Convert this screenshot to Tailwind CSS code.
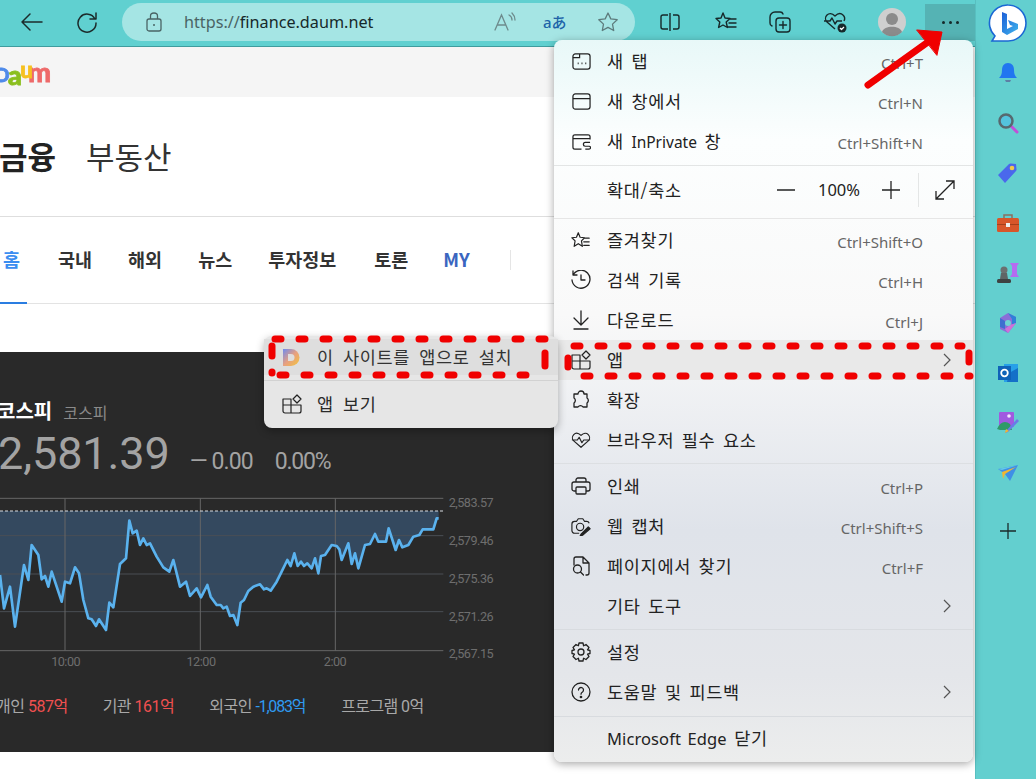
<!DOCTYPE html>
<html lang="ko">
<head>
  <meta charset="UTF-8" />
  <title>Daum 금융</title>
  <script src="https://cdn.jsdelivr.net/npm/@tailwindcss/browser@4"></script>
</head>
<body class="w-[1036px] h-[779px] overflow-hidden bg-white font-['Noto_Sans','Noto_Sans_CJK_KR',sans-serif] text-[#1b1b1b]">
<div class="relative flex w-[1036px] h-[779px] overflow-hidden">

  <!-- left column: toolbar + page -->
  <div class="w-[975px] h-full flex flex-col">
    <!-- toolbar -->
    <div class="h-[47px] shrink-0 bg-[#60d0d0] border-b border-[#3f9c9e] flex items-start pt-[3px]">
      <div class="w-[122px] h-[38px] flex items-center">
        <svg class="ml-[20px]" width="24" height="24" viewBox="0 0 24 24" fill="none" stroke="#1c2b2b" stroke-width="1.5" stroke-linecap="round" stroke-linejoin="round"><path d="M2 12h20M10 4l-8 8 8 8"/></svg>
        <svg class="ml-[31px]" width="24" height="24" viewBox="0 0 24 24" fill="none" stroke="#1c2b2b" stroke-width="1.5" stroke-linecap="round" stroke-linejoin="round"><path d="M20 9a9 9 0 1 0 1 4M21 3v6h-6"/></svg>
      </div>
      <div class="w-[513px] h-[38px] rounded-[19px] bg-[#a5e5e4] flex items-center">
        <svg class="ml-[24px]" width="16" height="20" viewBox="0 0 16 20" fill="none" stroke="#4a6465" stroke-width="1.3"><rect x="1" y="7" width="14" height="12" rx="2"/><path d="M4.5 7V4a3.5 3 0 0 1 7 0v3"/><circle cx="8" cy="13" r="1" fill="#4a6465" stroke="none"/></svg>
        <span class="ml-[22px] text-[16.2px] leading-none text-[#16292a]"><span class="text-[#4a6465]">https://</span>finance.daum.net</span>
        <span class="ml-auto mr-[16px] flex items-center gap-[28px]">
          <svg class="mr-[3px]" width="22" height="20" viewBox="0 0 22 20" fill="none" stroke="#6d8b8c" stroke-width="1.3" stroke-linecap="round"><path d="M1 18L7.5 3 14 18M3.5 13h8M15 3c2 1 3 3 3 5M18 1c2 2 3 4 3 7"/></svg>
          <span class="w-[22px] mr-[4px] ml-[-4px] whitespace-nowrap text-center text-[15px] leading-none font-medium text-[#2063a8] font-['Noto_Sans','Noto_Sans_CJK_JP',sans-serif]">aあ</span>
          <svg width="22" height="22" viewBox="0 0 22 22" fill="none" stroke="#5d7b7c" stroke-width="1.3" stroke-linejoin="round"><path d="M11 2l2.8 5.9 6.4.8-4.7 4.4 1.2 6.4L11 16.4l-5.7 3.1 1.2-6.4L1.800 8.700l6.400-.8z"/></svg>
        </span>
      </div>
      <div class="flex-1 h-[38px] flex items-center">
        <svg class="ml-[24px]" width="22" height="20" viewBox="0 0 22 20" fill="none" stroke="#16292a" stroke-width="1.4"><path d="M9 3H4a2 2 0 0 0-2 2v10a2 2 0 0 0 2 2h5M14 3h4a2 2 0 0 1 2 2v10a2 2 0 0 1-2 2h-4M11 1v18"/></svg>
        <svg class="ml-[33px]" width="24" height="22" viewBox="0 0 24 22" fill="none" stroke="#16292a" stroke-width="1.4" stroke-linejoin="round" stroke-linecap="round"><path d="M9 2l2 5 5 .5-3.800 3.500 1.200 5.500L9 14l-4.400 2.500 1.200-5.500L2 7.500 7 7zM16 8h6M15 12h7M14 16h8"/></svg>
        <svg class="ml-[30px]" width="24" height="24" viewBox="0 0 24 24" fill="none" stroke="#16292a" stroke-width="1.4" stroke-linecap="round"><rect x="8" y="8" width="14" height="14" rx="3"/><path d="M15 11.500v7M11.500 15h7M4 16a3 3 0 0 1-2-3V7a5 5 0 0 1 5-5h5a3 3 0 0 1 3 2"/></svg>
        <svg class="ml-[31px]" width="24" height="24" viewBox="0 0 24 24" fill="none" stroke="#16292a" stroke-width="1.4" stroke-linejoin="round"><path d="M12 19L4 12a5 5 0 0 1 0-7c2-2 5-2 8 1 3-3 6-3 8-1a5 5 0 0 1 1 6M1 11h6l2-3 3 6 2-3h5"/><circle cx="19" cy="18" r="4.500" fill="#16292a" stroke="none"/><path d="M17 18l1.500 1.500L21 17" stroke="#fff" stroke-width="1.200"/></svg>
        <svg class="ml-[30px]" width="30" height="30" viewBox="0 0 30 30"><circle cx="15" cy="15" r="14" fill="#cfcfcf"/><circle cx="15" cy="12" r="6" fill="#8b8b8b"/><path d="M5 25c2-7 18-7 20 0a14 14 0 0 1-20 0z" fill="#8b8b8b"/></svg>
        <div class="ml-[18px] w-[50px] h-[37px] bg-[#55b3b4] flex items-center justify-center gap-[4px]">
          <span class="w-[3px] h-[3px] rounded-full bg-[#15292a]"></span><span class="w-[3px] h-[3px] rounded-full bg-[#15292a]"></span><span class="w-[3px] h-[3px] rounded-full bg-[#15292a]"></span>
        </div>
      </div>
    </div>

    <!-- page -->
    <div class="h-[50px] shrink-0 bg-[#f5f5f5] flex items-center overflow-hidden">
      <span class="ml-[-5px] mt-[-2px] text-[27px] font-black leading-none tracking-[-1.5px] font-['Lato',sans-serif] [-webkit-text-stroke:0.8px] blur-[0.4px] whitespace-nowrap"><span class="text-[#4f8bea] text-[19px]">D</span><span class="inline-block translate-y-[3px] text-[#8bbf1f]">a</span><span class="inline-block -translate-y-[4px] text-[#f6c120] text-[22px] w-[8px]">u</span><span class="text-[#ee6a6a]">m</span></span>
    </div>
    <div class="h-[120px] shrink-0 border-b border-[#dedede] flex items-center font-['Noto_Sans_CJK_KR',sans-serif] text-[31px] leading-none pb-[3px]">
      <span class="ml-[-1px] font-bold text-[#222]">금융</span>
      <span class="ml-[30px] text-[#333]">부동산</span>
    </div>
    <div class="h-[87px] shrink-0 border-b border-[#e3e3e3] relative flex items-center font-['Noto_Sans_CJK_KR',sans-serif] text-[18.5px] font-bold leading-none text-[#333] pb-[1px]">
      <span class="ml-[3px] text-[#3b8ef0]">홈</span>
      <span class="ml-[38px]">국내</span>
      <span class="ml-[36px]">해외</span>
      <span class="ml-[36px]">뉴스</span>
      <span class="ml-[36px]">투자정보</span>
      <span class="ml-[38px]">토론</span>
      <span class="ml-[35px] text-[#3a66c0]">MY</span>
      <span class="ml-[40px] w-px h-[20px] bg-[#e5e5e5]"></span>
      <span class="absolute left-0 bottom-[-1px] w-[27px] h-[2px] bg-[#2a7de1]"></span>
    </div>

    <div class="h-[48px] shrink-0"></div>

    <!-- index card -->
    <div class="w-[570px] h-[400px] shrink-0 bg-[#292929] font-['Roboto','Noto_Sans_CJK_KR',sans-serif] overflow-hidden">
      <div class="flex items-baseline mt-[50px] ml-[-3px] leading-none">
        <span class="text-[20px] font-bold text-white">코스피</span>
        <span class="ml-[11px] text-[16px] text-[#8a8a8a]">코스피</span>
      </div>
      <div class="flex items-baseline mt-[9px] ml-[-2px] leading-none text-[#a3a3a3] h-[50px]">
        <span class="text-[45px] tracking-[-0.1px]">2,581.39</span>
        <span class="ml-[20px] text-[23px] tracking-[-0.9px]">— 0.00</span>
        <span class="ml-[22px] text-[23px] tracking-[-1.2px]">0.00%</span>
      </div>
      <svg class="mt-[9px]" width="520" height="190" viewBox="0 0 1560 570" font-family="Roboto" font-size="38" letter-spacing="-1.5">
        <polygon fill="#34495f" points="0,63 0,255 12,355 30,290 45,410 72,225 85,270 95,165 115,195 125,268 135,258 145,290 155,245 185,335 195,275 210,280 225,232 237,250 250,330 265,385 275,388 288,408 297,388 318,420 328,338 340,352 360,222 378,205 388,92 398,130 410,122 420,165 430,145 440,165 450,160 470,200 490,232 508,245 520,210 540,290 558,275 570,318 590,295 603,322 622,285 632,320 650,345 662,345 670,355 680,350 690,378 700,375 712,405 722,338 732,330 745,303 760,290 780,283 792,298 800,295 812,302 830,275 845,245 862,210 872,228 883,190 893,228 903,215 912,228 922,220 935,235 945,205 955,250 963,198 975,195 995,165 1010,168 1018,178 1025,210 1045,160 1055,222 1065,190 1075,235 1095,165 1110,162 1125,132 1135,155 1158,155 1166,115 1187,180 1197,150 1207,172 1225,165 1240,140 1258,135 1268,118 1300,118 1310,85 1316,85 1316,63"/>
        <g stroke="#4a4f55" stroke-width="3">
          <path d="M0 137H1330M0 252H1330M0 365H1330"/>
        </g>
        <g stroke="#666" stroke-width="3">
          <path d="M0 25H1330M0 482H1330M195 25V482M601 25V482M1006 25V482"/>
        </g>
        <path d="M0 63H1330" stroke="#d8dde2" stroke-width="3" stroke-dasharray="9 6"/>
        <polyline fill="none" stroke="#5ab2ee" stroke-width="8" stroke-linejoin="round" points="0,255 12,355 30,290 45,410 72,225 85,270 95,165 115,195 125,268 135,258 145,290 155,245 185,335 195,275 210,280 225,232 237,250 250,330 265,385 275,388 288,408 297,388 318,420 328,338 340,352 360,222 378,205 388,92 398,130 410,122 420,165 430,145 440,165 450,160 470,200 490,232 508,245 520,210 540,290 558,275 570,318 590,295 603,322 622,285 632,320 650,345 662,345 670,355 680,350 690,378 700,375 712,405 722,338 732,330 745,303 760,290 780,283 792,298 800,295 812,302 830,275 845,245 862,210 872,228 883,190 893,228 903,215 912,228 922,220 935,235 945,205 955,250 963,198 975,195 995,165 1010,168 1018,178 1025,210 1045,160 1055,222 1065,190 1075,235 1095,165 1110,162 1125,132 1135,155 1158,155 1166,115 1187,180 1197,150 1207,172 1225,165 1240,140 1258,135 1268,118 1300,118 1310,85 1316,85"/>
        <g fill="#6e6e6e">
          <text x="1346" y="50">2,583.57</text>
          <text x="1346" y="165">2,579.46</text>
          <text x="1346" y="278">2,575.36</text>
          <text x="1346" y="393">2,571.26</text>
          <text x="1346" y="505">2,567.15</text>
          <text x="197" y="528" text-anchor="middle">10:00</text>
          <text x="603" y="528" text-anchor="middle">12:00</text>
          <text x="1005" y="528" text-anchor="middle">2:00</text>
        </g>
      </svg>
      <div class="flex mt-[19px] ml-[-4px] text-[16px] leading-none tracking-[-0.5px] text-[#a8a8a8] whitespace-nowrap">
        <span>개인 <span class="text-[#f05050]">587억</span></span>
        <span class="ml-[35px]">기관 <span class="text-[#f05050]">161억</span></span>
        <span class="ml-[35px]">외국인 <span class="text-[#2f9bf0] tracking-[-1.2px]">-1,083억</span></span>
        <span class="ml-[36px] tracking-[-0.6px]">프로그램 0억</span>
      </div>
    </div>
  </div>

  <!-- sidebar -->
  <div class="w-[61px] h-full bg-[#63cfcf] border-l border-[#58bfc0] pl-[3px] flex flex-col items-center">
    <div class="h-[48px] flex items-center">
      <svg width="40" height="42" viewBox="0 0 40 42">
        <defs><linearGradient id="bingB" x1="0" y1="0" x2="1" y2="1"><stop offset="0" stop-color="#1d5fd8"/><stop offset="1" stop-color="#3fb4ec"/></linearGradient></defs>
        <path d="M20 2a18 18 0 0 1 0 36H4l3-5A18 18 0 0 1 20 2z" fill="#fff" stroke="#1a68d4" stroke-width="1.600"/>
        <path d="M14 9l5 2v15l6-3-3-1-2-5 10 4v5l-11 6-5-3z" fill="url(#bingB)"/>
      </svg>
    </div>
    <div class="h-[50px] flex items-center">
      <svg width="20" height="22" viewBox="0 0 20 22"><path d="M10 1c4 0 6 3 6 7 0 4 1 6 3 8H1c2-2 3-4 3-8 0-4 2-7 6-7z" fill="#2176f0"/><path d="M7 18h6l-1 2H8z" fill="#5d7fa5"/></svg>
    </div>
    <div class="h-[50px] flex items-center">
      <svg width="22" height="22" viewBox="0 0 22 22"><path d="M13 13l7 7" stroke="#c14fd8" stroke-width="3" stroke-linecap="round"/><circle cx="9" cy="9" r="6.500" fill="#54c3de" stroke="#57686f" stroke-width="2.500"/></svg>
    </div>
    <div class="h-[50px] flex items-center">
      <svg width="22" height="22" viewBox="0 0 22 22"><path d="M1 13L12 2a2 2 0 0 1 2-.5l5 .5.500 5a2 2 0 0 1-.5 2L8 21z" fill="#4a68ec"/><circle cx="15" cy="6" r="2.300" fill="#f2c94c"/></svg>
    </div>
    <div class="h-[50px] flex items-center">
      <svg width="24" height="20" viewBox="0 0 24 20"><path d="M8 6V2h8v4" fill="none" stroke="#8a7060" stroke-width="1.500"/><rect x="1" y="5" width="22" height="14" rx="1.500" fill="#d8562a"/><rect x="1" y="11" width="22" height="1" fill="#a5401c"/><rect x="10" y="10" width="4" height="4" fill="#eee"/></svg>
    </div>
    <div class="h-[50px] flex items-center">
      <svg width="24" height="22" viewBox="0 0 24 22"><path d="M14 1h9l-2 3v8l2 3h-9l2-3V4z" fill="#b56cf0"/><circle cx="8" cy="8" r="3.500" fill="#6b7070"/><path d="M5 11h6l1 6H4z" fill="#5f6464"/><rect x="1" y="17" width="14" height="4" rx="1.500" fill="#3e4242"/></svg>
    </div>
    <div class="h-[50px] flex items-center">
      <svg width="22" height="22" viewBox="0 0 22 22"><path d="M11 1l8 4v6l-8 10-8-4V6z" fill="#8a6fd8"/><path d="M11 1l8 4v6l-4 2V7z" fill="#2f80d8"/><path d="M3 6l5 3v8l-5-2z" fill="#3e6fd0"/><path d="M8 17l5-4 6-2-8 10z" fill="#d070d8"/><circle cx="11" cy="11" r="3" fill="#6fd3d3"/></svg>
    </div>
    <div class="h-[50px] flex items-center">
      <svg width="22" height="20" viewBox="0 0 22 20"><path d="M7 1h14v18H7z" fill="#27a0e8"/><path d="M12 10l9-5v14H10z" fill="#1470c8"/><rect x="1" y="3" width="13" height="14" fill="#0f62b8"/><circle cx="7.500" cy="10" r="3.300" fill="none" stroke="#fff" stroke-width="1.800"/></svg>
    </div>
    <div class="h-[50px] flex items-center">
      <svg width="24" height="24" viewBox="0 0 24 24"><rect x="3" y="1" width="15" height="15" rx="1" fill="#a05ae0"/><circle cx="13" cy="5" r="1.800" fill="#f3e6ff"/><path d="M1 18c3-7 8-9 13-5l2 6H4z" fill="#2f9a68"/><path d="M10 20l11-12 2 2-11 11-3 1z" fill="#6a7ae8"/><path d="M9 22l1-4 3 2z" fill="#f2b632"/></svg>
    </div>
    <div class="h-[50px] flex items-center">
      <svg width="22" height="18" viewBox="0 0 22 18"><path d="M1 5L21 1 13 17 8 10z" fill="#3f8fe6"/><path d="M1 5L21 1 5 6z" fill="#64c9e8"/><path d="M5 8l14-5-11 7-2 5z" fill="#f2b632"/></svg>
    </div>
    <div class="h-[58px] flex items-center pt-[8px]">
      <svg width="16" height="16" viewBox="0 0 16 16" stroke="#1b2b2b" stroke-width="1.300"><path d="M8 0v16M0 8h16"/></svg>
    </div>
  </div>

  <!-- main menu -->
  <div class="absolute left-[554px] top-[40px] w-[419px] h-[722px] rounded-lg overflow-hidden bg-[linear-gradient(180deg,#e8f8f8_0%,#fcfefe_14%,#f9f9f9_38%,#dfe3ea_68%,#e4e6ea_88%,#eceded_100%)] shadow-[0_2px_8px_rgba(0,0,0,0.35)] font-['Noto_Sans_CJK_KR',sans-serif] text-[17.5px] leading-none tracking-[0.7px] [word-spacing:2px] text-[#222]">
    <div class="pt-px pb-[4px]">
      <div class="h-10 flex items-center px-[17px]">
        <svg class="ml-px w-[19px] h-[19px] shrink-0" viewBox="0 0 20 20" fill="none" stroke="#222" stroke-width="1.300"><rect x="1" y="2" width="18" height="16" rx="2.500"/><path d="M1 6h7V2"/><path d="M6 12h1M10 12h1M14 12h1" stroke-width="2"/></svg>
        <span class="ml-[16px]">새 탭</span><span class="ml-auto mr-[33px] mt-[5px] font-['Noto_Sans',sans-serif] text-[15px] tracking-normal text-[#666]">Ctrl+T</span>
      </div>
      <div class="h-10 flex items-center px-[17px]">
        <svg class="ml-px w-[19px] h-[19px] shrink-0" viewBox="0 0 20 20" fill="none" stroke="#222" stroke-width="1.300"><rect x="1" y="2" width="18" height="16" rx="2.500"/><path d="M1 7h18"/></svg>
        <span class="ml-[16px]">새 창에서</span><span class="ml-auto mr-[33px] mt-[5px] font-['Noto_Sans',sans-serif] text-[15px] tracking-normal text-[#666]">Ctrl+N</span>
      </div>
      <div class="h-10 flex items-center px-[17px]">
        <svg class="ml-px w-[19px] h-[19px] shrink-0" viewBox="0 0 20 20" fill="none" stroke="#222" stroke-width="1.300"><path d="M19 8V5a2 2 0 0 0-2-2H3a2 2 0 0 0-2 2v11a2 2 0 0 0 2 2h7M1 7h18"/><path d="M19 11h-5a2 2 0 0 0 0 4h4a1.500 1.500 0 0 1 0 3h-4"/></svg>
        <span class="ml-[16px]">새 <span class="font-['Noto_Sans',sans-serif] text-[15.5px] tracking-normal">InPrivate</span> 창</span><span class="ml-auto mr-[33px] mt-[5px] font-['Noto_Sans',sans-serif] text-[15px] tracking-normal text-[#666]">Ctrl+Shift+N</span>
      </div>
    </div>
    <div class="border-t border-[#e3e5e5] h-[53px] flex items-center px-[17px] pb-[4px]">
      <span class="ml-[36px]">확대/축소</span>
      <svg class="ml-auto" width="18" height="2" viewBox="0 0 18 2"><path d="M0 1h18" stroke="#222" stroke-width="1.300"/></svg>
      <span class="ml-[23px] font-['Noto_Sans',sans-serif] text-[16.5px] tracking-normal">100%</span>
      <svg class="ml-[22px]" width="18" height="18" viewBox="0 0 18 18" stroke="#222" stroke-width="1.300"><path d="M9 0v18M0 9h18"/></svg>
      <span class="ml-[18px] w-px h-[34px] bg-[#e4e6e6]"></span>
      <svg class="ml-[16px] mr-[1px]" width="20" height="20" viewBox="0 0 20 20" fill="none" stroke="#222" stroke-width="1.300"><path d="M1 19L19 1M11 1h8v8M9 19H1v-8"/></svg>
    </div>
    <div class="border-t border-[#e6e6e6] pt-px pb-[3px]">
      <div class="h-10 flex items-center px-[17px]">
        <svg class="w-5 h-5 shrink-0" viewBox="0 0 22 20" fill="none" stroke="#222" stroke-width="1.300" stroke-linejoin="round" stroke-linecap="round"><path d="M8 2l2 5 5 .5-3.500 3.500 1 6L8 14l-4.500 3 1-6L1 7.500 6 7zM15 8h5M14 12h6M14 16h6"/></svg>
        <span class="ml-[16px]">즐겨찾기</span><span class="ml-auto mr-[33px] mt-[5px] font-['Noto_Sans',sans-serif] text-[15px] tracking-normal text-[#666]">Ctrl+Shift+O</span>
      </div>
      <div class="h-10 flex items-center px-[17px]">
        <svg class="w-5 h-5 shrink-0" viewBox="0 0 20 20" fill="none" stroke="#222" stroke-width="1.300" stroke-linecap="round" stroke-linejoin="round"><path d="M2 5a9 9 0 1 1-1 5M2 1v4h4M10 5v5h4"/></svg>
        <span class="ml-[16px]">검색 기록</span><span class="ml-auto mr-[33px] mt-[5px] font-['Noto_Sans',sans-serif] text-[15px] tracking-normal text-[#666]">Ctrl+H</span>
      </div>
      <div class="h-10 flex items-center px-[17px]">
        <svg class="w-5 h-5 shrink-0" viewBox="0 0 20 20" fill="none" stroke="#222" stroke-width="1.300" stroke-linecap="round" stroke-linejoin="round"><path d="M10 1v13M3 8l7 7 7-7M3 19h14"/></svg>
        <span class="ml-[16px]">다운로드</span><span class="ml-auto mr-[33px] mt-[5px] font-['Noto_Sans',sans-serif] text-[15px] tracking-normal text-[#666]">Ctrl+J</span>
      </div>
      <div class="h-10 flex items-center px-[17px] bg-[#e9e9e9]">
        <svg class="w-5 h-5 shrink-0" viewBox="0 0 20 20" fill="none" stroke="#222" stroke-width="1.200" stroke-linejoin="round"><path d="M1 5h8v14H3a2 2 0 0 1-2-2zM1 11h18v6a2 2 0 0 1-2 2H9M9 11h8M15 1l4 4-4 4-4-4z"/></svg>
        <span class="ml-[16px]">앱</span>
        <svg class="ml-auto mr-[5px]" width="8" height="14" viewBox="0 0 8 14" fill="none" stroke="#555" stroke-width="1.200"><path d="M1 1l6 6-6 6"/></svg>
      </div>
      <div class="h-10 flex items-center px-[17px]">
        <svg class="w-5 h-5 shrink-0" viewBox="0 0 20 20" fill="none" stroke="#222" stroke-width="1.300" stroke-linejoin="round"><path d="M7 4a3 3 0 0 1 6 0h3v4a3 3 0 0 1 0 5v4h-4a3 3 0 0 0-5 0H3v-4a3 3 0 0 0 0-5V4z"/></svg>
        <span class="ml-[16px]">확장</span>
      </div>
      <div class="h-10 flex items-center px-[17px]">
        <svg class="w-5 h-5 shrink-0" viewBox="0 0 22 20" fill="none" stroke="#222" stroke-width="1.300" stroke-linejoin="round"><path d="M11 18L3 11a5 5 0 0 1 0-7c2-2 5-2 8 1 3-3 6-3 8-1a5 5 0 0 1 0 7zM1 10h6l2-3 3 6 2-3h7"/></svg>
        <span class="ml-[16px]">브라우저 필수 요소</span>
      </div>
    </div>
    <div class="border-t border-[#dcdfe2] pt-[2px] pb-[3px]">
      <div class="h-10 flex items-center px-[17px]">
        <svg class="w-5 h-5 shrink-0" viewBox="0 0 20 20" fill="none" stroke="#222" stroke-width="1.300" stroke-linejoin="round"><path d="M5 6V4a2 2 0 0 1 2-2h6a2 2 0 0 1 2 2v2M5 15H3a2 2 0 0 1-2-2V8a2 2 0 0 1 2-2h14a2 2 0 0 1 2 2v5a2 2 0 0 1-2 2h-2"/><rect x="5" y="11" width="10" height="7" rx="1"/></svg>
        <span class="ml-[16px]">인쇄</span><span class="ml-auto mr-[33px] mt-[5px] font-['Noto_Sans',sans-serif] text-[15px] tracking-normal text-[#666]">Ctrl+P</span>
      </div>
      <div class="h-10 flex items-center px-[17px]">
        <svg class="w-5 h-5 shrink-0" viewBox="0 0 22 20" fill="none" stroke="#222" stroke-width="1.300" stroke-linejoin="round"><path d="M9 18H4a3 3 0 0 1-3-3V8a3 3 0 0 1 3-3h2l2-3h5l2 3h2a3 3 0 0 1 3 2"/><circle cx="10" cy="11" r="4"/><path d="M11 19l8-8 2 2-8 7-3 1z" fill="#222"/></svg>
        <span class="ml-[16px]">웹 캡처</span><span class="ml-auto mr-[33px] mt-[5px] font-['Noto_Sans',sans-serif] text-[15px] tracking-normal text-[#666]">Ctrl+Shift+S</span>
      </div>
      <div class="h-10 flex items-center px-[17px]">
        <svg class="w-5 h-5 shrink-0" viewBox="0 0 20 20" fill="none" stroke="#222" stroke-width="1.300" stroke-linejoin="round" stroke-linecap="round"><path d="M3 9V3a2 2 0 0 1 2-2h7l6 6v10a2 2 0 0 1-2 2h-1M12 1v6h6"/><circle cx="6.500" cy="13" r="4"/><path d="M9.500 16l3 3"/></svg>
        <span class="ml-[16px]">페이지에서 찾기</span><span class="ml-auto mr-[33px] mt-[5px] font-['Noto_Sans',sans-serif] text-[15px] tracking-normal text-[#666]">Ctrl+F</span>
      </div>
      <div class="h-10 flex items-center px-[17px]">
        <span class="ml-[36px]">기타 도구</span>
        <svg class="ml-auto mr-[5px]" width="8" height="14" viewBox="0 0 8 14" fill="none" stroke="#555" stroke-width="1.200"><path d="M1 1l6 6-6 6"/></svg>
      </div>
    </div>
    <div class="border-t border-[#d8dbdf] pt-[2px] pb-[4px]">
      <div class="h-10 flex items-center px-[17px]">
        <svg class="w-5 h-5 shrink-0" viewBox="0 0 20 20" fill="none" stroke="#222" stroke-width="1.300" stroke-linejoin="round"><circle cx="10" cy="10" r="3"/><path d="M8 1h4l.6 2.800 2.400-1.300 3 3-1.500 2.300L19 8.500v3l-2.500.7 1.500 2.300-3 3-2.400-1.300L12 19H8l-.6-2.800L5 17.500l-3-3 1.500-2.300L1 11.500v-3l2.500-.7L2 5.500l3-3 2.400 1.300z"/></svg>
        <span class="ml-[16px]">설정</span>
      </div>
      <div class="h-10 flex items-center px-[17px]">
        <svg class="w-5 h-5 shrink-0" viewBox="0 0 20 20" fill="none" stroke="#222" stroke-width="1.300" stroke-linecap="round"><circle cx="10" cy="10" r="9"/><path d="M7.500 8a2.500 2.500 0 1 1 4 2c-1 .7-1.500 1.200-1.500 2.200"/><circle cx="10" cy="15" r="0.700" fill="#222"/></svg>
        <span class="ml-[16px]">도움말 및 피드백</span>
        <svg class="ml-auto mr-[5px]" width="8" height="14" viewBox="0 0 8 14" fill="none" stroke="#555" stroke-width="1.200"><path d="M1 1l6 6-6 6"/></svg>
      </div>
    </div>
    <div class="border-t border-[#d8dbdf] pt-px">
      <div class="h-10 flex items-center px-[17px]">
        <span class="ml-[36px]"><span class="font-['Noto_Sans',sans-serif] text-[16.5px] tracking-[0.1px]">Microsoft Edge</span> 닫기</span>
      </div>
    </div>
  </div>

  <!-- apps flyout sits over the menu's left edge -->
  <div class="absolute left-[264px] top-[336px] w-[294px] h-[92px] rounded-lg bg-[#e6e6e6] shadow-[0_3px_8px_rgba(0,0,0,0.3)] font-['Noto_Sans_CJK_KR',sans-serif] text-[17.5px] leading-none tracking-[0.7px] [word-spacing:3.5px] text-[#2a2a2a]">
    <div class="mt-[3px] h-[36px] bg-[#dedede] flex items-center">
      <svg class="ml-[18px]" width="19" height="19" viewBox="0 0 19 19"><defs><linearGradient id="daumD" x1="0" y1="0" x2="1" y2="1"><stop offset="0" stop-color="#6d8bf0"/><stop offset="0.5" stop-color="#e8a080"/><stop offset="1" stop-color="#f2c53c"/></linearGradient></defs><path d="M1 1h8a8.500 8.500 0 0 1 0 17H1z" fill="url(#daumD)"/><path d="M6 6h3a3.500 3.500 0 0 1 0 7H6z" fill="#dedede"/></svg>
      <span class="ml-[16px] text-[#333] whitespace-nowrap">이 사이트를 앱으로 설치</span>
    </div>
    <div class="mt-[5px] border-t border-[#d2d2d2]"></div>
    <div class="h-[46px] flex items-center">
      <svg class="ml-[18px]" width="20" height="20" viewBox="0 0 20 20" fill="none" stroke="#222" stroke-width="1.200" stroke-linejoin="round"><path d="M1 5h8v14H3a2 2 0 0 1-2-2zM1 11h18v6a2 2 0 0 1-2 2H9M9 11h8M15 1l4 4-4 4-4-4z"/></svg>
      <span class="ml-[15px]">앱 보기</span>
    </div>
  </div>

  <!-- red annotations drawn on top of the screenshot -->
  <svg class="absolute left-0 top-0 pointer-events-none" width="1036" height="779" viewBox="0 0 1036 779" fill="none" stroke="#f00000" stroke-linecap="round">
    <g stroke-width="7" stroke-dasharray="6 18">
      <path d="M275 339H548"/>
      <path d="M280 375H540"/>
      <path d="M574 346H962"/>
      <path d="M584 376H970"/>
    </g>
    <g stroke-width="7">
      <path d="M272 346v10"/>
      <path d="M272 372v1"/>
      <path d="M545 353v13"/>
      <path d="M568 358v9"/>
      <path d="M969 353v9"/>
      <path d="M868 85L928 42" stroke-width="7"/>
    </g>
    <path d="M917 30L942 32 937 55z" fill="#f00000" stroke="#f00000" stroke-width="1" stroke-linejoin="round"/>
  </svg>
</div>
</body>
</html>
